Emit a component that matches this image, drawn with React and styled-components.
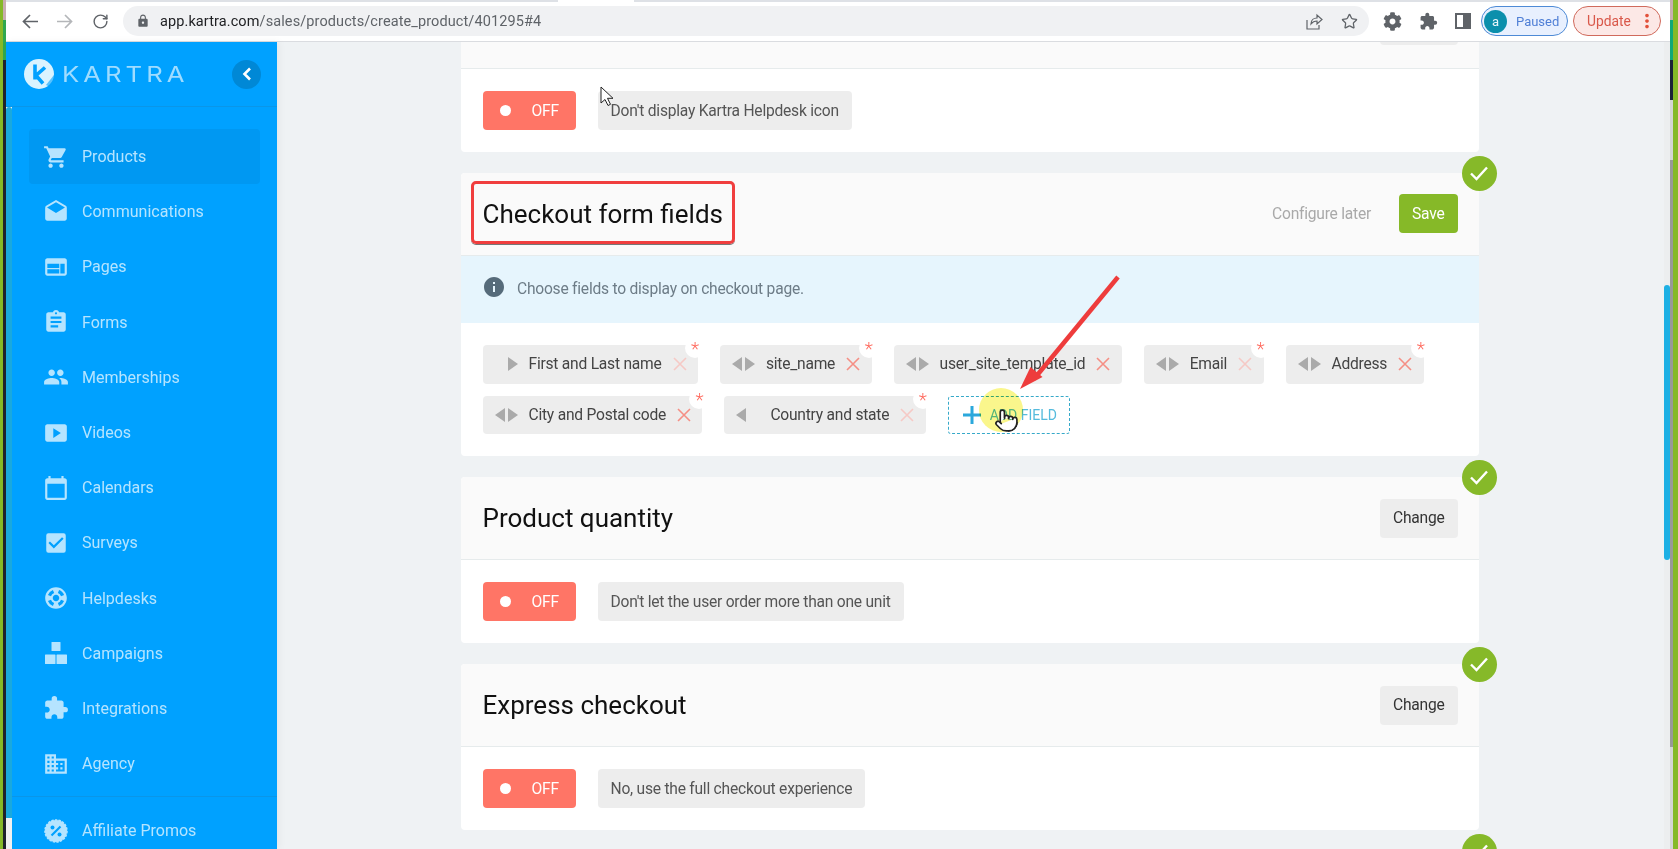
import styled, { createGlobalStyle, css } from "styled-components";
import { Pointer, RotateCw, Star } from "lucide-react";
import { FaCog } from "react-icons/fa";
import {
  MdCalendarToday,
  MdCheckBox,
  MdDomain,
  MdDrafts,
  MdExtension,
  MdGroup,
  MdInfo,
  MdLock,
  MdMoreVert,
  MdShoppingCart,
  MdSmartDisplay,
  MdSupport,
  MdAssignment,
  MdWeb,
} from "react-icons/md";

const GlobalStyle = createGlobalStyle`
  html, body { margin: 0; padding: 0; overflow: hidden; background: #eff2f4; }
  * { box-sizing: border-box; }
  body { font-family: Roboto, "Liberation Sans", sans-serif; }
`;

// the page text in the screenshot is a bit condensed
const bodyText = css`
  font-size: 15.6px;
  letter-spacing: -0.23px;
`;

const Frame = styled.div`
  display: flex;
  width: 1678px;
  height: 849px;
  overflow: hidden;
`;

const LeftEdge = styled.div`
  flex: 0 0 6px;
  background:
    linear-gradient(to bottom, #c9aeb0 0 20px, #2fa84f 20px 60px, #20242c 60px) 3px 0 / 3px 100% no-repeat,
    #86b928;
`;

const RightEdge = styled.div`
  flex: 0 0 8px;
  background:
    linear-gradient(
        to bottom,
        #c9aeb0 0 20px,
        #10a878 20px 60px,
        #1c2238 60px 100px,
        #d5d5d5 100px 160px,
        #999 160px 747px,
        #d5d5d5 747px
      )
      0 0 / 3px 100% no-repeat,
    #86b928;
`;

const Window = styled.div`
  flex: 1;
  display: flex;
  flex-direction: column;
  min-width: 0;
`;

const Toolbar = styled.header`
  flex: 0 0 42px;
  display: flex;
  align-items: center;
  padding: 2px 9px 1px 16px;
  background:
    linear-gradient(to right, #dee1e6 0 552px, #fff 552px 628px, #dee1e6 628px) 0 0 / 100% 2px no-repeat,
    #fff;
  border-bottom: 1px solid #dadce0;
`;

const NavIcon = styled.span`
  display: flex;
  width: 35px;
  color: ${(p) => (p.$off ? "#b4b6b9" : "#5f6368")};
`;

const UrlPill = styled.div`
  width: 1246px;
  height: 30px;
  margin-left: -4px;
  display: flex;
  align-items: center;
  padding: 0 11px 0 13px;
  border-radius: 15px;
  background: #f0f1f3;
  color: #5f6368;
  font-size: 14.5px;
  letter-spacing: 0.1px;
`;

const UrlText = styled.span`
  margin-left: 10px;
  margin-right: auto;
  white-space: nowrap;
  b {
    color: #202124;
    font-weight: 400;
  }
`;

const PillIcon = styled.span`
  display: flex;
  margin-left: 18px;
  color: #5f6368;
`;

const ExtIcons = styled.div`
  display: flex;
  align-items: center;
  gap: 17px;
  margin-left: 14px;
  margin-right: 10px;
  color: #5f6368;
  svg {
    display: block;
  }
`;

const ProfilePill = styled.div`
  width: 87px;
  height: 30px;
  display: flex;
  align-items: center;
  padding-left: 2px;
  border: 1.5px solid #4d8ad6;
  border-radius: 15px;
  background: #e8f0fe;
  color: #4f7fd6;
  font-size: 13px;
`;

const Avatar = styled.span`
  width: 23px;
  height: 23px;
  margin-right: 9px;
  display: flex;
  align-items: center;
  justify-content: center;
  border-radius: 50%;
  background: #0b8fac;
  color: #e8f6fa;
  font-size: 13px;
`;

const UpdatePill = styled.div`
  width: 88px;
  height: 30px;
  margin-left: 5px;
  display: flex;
  align-items: center;
  justify-content: space-between;
  padding: 0 2px 0 13px;
  border: 1.5px solid #d06a5c;
  border-radius: 15px;
  background: #fce8e6;
  color: #d9584a;
  font-size: 13.8px;
`;

const Workspace = styled.div`
  flex: 1;
  display: flex;
  min-height: 0;
`;

const Sidebar = styled.aside`
  position: relative;
  flex: 0 0 271px;
  display: flex;
  flex-direction: column;
  background: #00a1ff;
  color: #b5e4ff;
  box-shadow: 2px 0 8px rgba(0, 0, 0, 0.05);
  z-index: 2;
`;

const Brand = styled.div`
  flex: 0 0 65px;
  display: flex;
  align-items: center;
  padding: 0 16px 0 18px;
  border-bottom: 1px solid #0a96e8;
`;

const BrandName = styled.span`
  flex: 1;
  margin-left: 8px;
  color: #9fdcff;
  font-family: Inter, sans-serif;
  font-size: 22px;
  letter-spacing: 3.4px;
  transform: scaleX(1.17);
  transform-origin: left center;
`;

const Collapse = styled.span`
  width: 29px;
  height: 29px;
  display: flex;
  align-items: center;
  justify-content: center;
  border-radius: 50%;
  background: #0088d6;
`;

const SidebarTrack = styled.div`
  position: absolute;
  left: 0;
  top: 65px;
  bottom: 0;
  width: 6px;
  background: #f1f1f1;
`;

const SidebarThumb = styled.div`
  height: 711px;
  background: #1aa9dd;
  border-radius: 3px 3px 0 0;
`;

const Nav = styled.nav`
  display: flex;
  flex-direction: column;
  padding: 22px 17px 0 23px;
`;

const NavItem = styled.div`
  height: 55.2px;
  display: flex;
  align-items: center;
  gap: 13px;
  padding-left: 14px;
  border-radius: 4px;
  background: ${(p) => (p.$active ? "#0098f2" : "transparent")};
  font-size: 16.05px;
  svg {
    flex: none;
  }
`;

const NavFoot = styled(Nav)`
  margin-top: 5px;
  padding-top: 6px;
  border-top: 1px solid #0a96e8;
`;

const Main = styled.main`
  position: relative;
  flex: 1;
  overflow: hidden;
  background: #eff2f4;
`;

const PageTrack = styled.div`
  flex: 0 0 6px;
  padding-top: 243px;
  background: #eceeef;
`;

const PageThumb = styled.div`
  height: 275px;
  background: #1db0e4;
  border-radius: 3px;
`;

const Stack = styled.div`
  width: 1018px;
  margin: -56px 0 0 184px;
  display: flex;
  flex-direction: column;
  gap: 21px;
`;

const Card = styled.section`
  position: relative;
  background: #fff;
  border-radius: 4px;
`;

const CheckBadge = styled.span`
  position: absolute;
  right: -17.5px;
  top: -17.5px;
  width: 35px;
  height: 35px;
  display: flex;
  align-items: center;
  justify-content: center;
  border-radius: 50%;
  background: #86b929;
`;

const CardHead = styled.div`
  height: ${(p) => (p.$short ? "82.5px" : "83px")};
  display: flex;
  align-items: center;
  justify-content: space-between;
  padding: 0 21.5px;
  background: #fafafa;
  border-radius: 4px 4px 0 0;
  border-bottom: 1.5px solid #e6ebec;
`;

const Title = styled.h2`
  margin: 0;
  color: #111;
  font-size: 26px;
  font-weight: 400;
`;

const HeadActions = styled.div`
  display: flex;
  align-items: center;
  gap: 28px;
`;

const Later = styled.span`
  color: #a9a9a9;
  ${bodyText}
`;

const HeadButton = styled.span`
  height: 39px;
  display: flex;
  align-items: center;
  padding: 0 13px;
  margin-top: ${(p) => (p.$lift ? "-4px" : "0")};
  border-radius: 4px;
  background: ${(p) => (p.$save ? "#86b928" : "#ededed")};
  color: ${(p) => (p.$save ? "#fff" : "#333")};
  ${bodyText}
`;

const CardBody = styled.div`
  display: flex;
  gap: 21.5px;
  padding: 22px 21.5px;
`;

const OffSwitch = styled.span`
  width: 93.5px;
  height: 39px;
  display: flex;
  align-items: center;
  padding-left: 17px;
  border-radius: 4px;
  background: #ff7566;
  color: #fff;
  ${bodyText}
  i {
    width: 11px;
    height: 11px;
    margin-right: 21px;
    border-radius: 50%;
    background: #fff;
  }
`;

const OptionLabel = styled.span`
  height: 39px;
  display: flex;
  align-items: center;
  padding: 0 13px;
  border-radius: 4px;
  background: #ededed;
  color: #555;
  ${bodyText}
`;

const InfoBand = styled.div`
  height: 67.5px;
  display: flex;
  align-items: center;
  gap: 11px;
  padding: 0 21px;
  background: #e6f5fd;
  color: #6d7c87;
  ${bodyText}
  svg {
    color: #566b7a;
    margin-top: -4px;
  }
`;

const Tags = styled.div`
  display: flex;
  flex-wrap: wrap;
  gap: 12px 22px;
  padding: 22px 21.5px;
`;

const Tag = styled.div`
  position: relative;
  height: 38.5px;
  display: flex;
  align-items: center;
  padding: 0 11.4px 0 12px;
  border-radius: 4px;
  background: #ededed;
  color: #444;
  ${bodyText}
`;

const Triangle = styled.span`
  width: 0;
  height: 0;
  margin-right: ${(p) => (p.$right ? "10.5px" : "3.5px")};
  border-top: 7px solid transparent;
  border-bottom: 7px solid transparent;
  ${(p) => (p.$right ? "border-left" : "border-right")}: 10px solid #aaa;
  visibility: ${(p) => (p.$hide ? "hidden" : "visible")};
`;

const Remove = styled.svg`
  margin-left: 11px;
  width: 14px;
  height: 14px;
  stroke: ${(p) => (p.$faded ? "#f6c9c5" : "#f58f85")};
  stroke-width: 1.6;
`;

const Required = styled.span`
  position: absolute;
  right: -7px;
  top: -7px;
  width: 20px;
  height: 20px;
  display: flex;
  justify-content: center;
  border-radius: 50%;
  background: #fff;
  color: #ff6b5f;
  font-size: 19px;
  font-weight: 300;
  line-height: 22px;
`;

const AddField = styled.div`
  width: 122.5px;
  height: 38.5px;
  display: flex;
  align-items: center;
  gap: 9px;
  padding-left: 14px;
  border: 1px dashed #36a9c9;
  border-radius: 3px;
  color: #55bbdd;
  font-size: 14px;
  white-space: nowrap;
`;

const Highlight = styled.span`
  position: absolute;
  left: 702px;
  top: 346px;
  width: 44px;
  height: 44px;
  border-radius: 50%;
  background: #faf68c;
  mix-blend-mode: multiply;
`;

const HandCursor = styled(Pointer)`
  position: absolute;
  left: 717px;
  top: 366px;
`;

const ArrowCursor = styled.svg`
  position: absolute;
  left: 323px;
  top: 44px;
`;

const RedBox = styled.span`
  position: absolute;
  left: 194px;
  top: 139px;
  width: 264px;
  height: 63px;
  border: 3.5px solid #f03e3e;
  border-radius: 5px;
  box-shadow: 0 1px 0 #777;
`;

const RedArrow = styled.svg`
  position: absolute;
  left: 730px;
  top: 225px;
`;

const navItems = [
  ["Products", MdShoppingCart],
  ["Communications", MdDrafts],
  ["Pages", MdWeb],
  ["Forms", MdAssignment],
  ["Memberships", MdGroup],
  ["Videos", MdSmartDisplay],
  ["Calendars", MdCalendarToday],
  ["Surveys", MdCheckBox],
  ["Helpdesks", MdSupport],
  ["Campaigns", CampaignIcon],
  ["Integrations", MdExtension],
  ["Agency", MdDomain],
];

const fields = [
  { name: "First and Last name", noLeft: true, faded: true },
  { name: "site_name" },
  { name: "user_site_template_id", noStar: true },
  { name: "Email", faded: true },
  { name: "Address" },
  { name: "City and Postal code" },
  { name: "Country and state", noRight: true, faded: true },
];

function CampaignIcon({ size }) {
  return (
    <svg width={size} height={size} viewBox="0 0 26 26" fill="currentColor">
      <rect x="8.5" y="2" width="9" height="9" rx="0.6" />
      <rect x="2" y="14.5" width="10.5" height="9.5" rx="0.6" />
      <rect x="13.5" y="14.5" width="10.5" height="9.5" rx="0.6" />
    </svg>
  );
}

function PromoIcon({ size }) {
  return (
    <svg width={size} height={size} viewBox="0 0 26 26">
      <circle cx="13" cy="13" r="11" fill="currentColor" stroke="currentColor" strokeWidth="1.6" strokeDasharray="2.4 1.2" />
      <path d="M17.5 8.5l-9 9" stroke="#00a1ff" strokeWidth="2.2" />
      <circle cx="9.5" cy="9.5" r="2" fill="#00a1ff" />
      <circle cx="16.5" cy="16.5" r="2" fill="#00a1ff" />
    </svg>
  );
}

function KartraMark() {
  return (
    <svg width="30" height="30" viewBox="0 0 30 30">
      <circle cx="15" cy="15" r="15" fill="#d9f3ff" />
      <path d="M11 5.500v15M21 8.500l-9 8 7 8" fill="none" stroke="#00a1ff" strokeWidth="3.6" />
      <path d="M22 26l8-10v14z" fill="#00a1ff" opacity="0.6" />
    </svg>
  );
}

function Check() {
  return (
    <CheckBadge>
      <svg width="20" height="16" viewBox="0 0 20 16" fill="none" stroke="#fff" strokeWidth="2.4">
        <path d="M2 8.500l5.500 5.500L18 2.500" />
      </svg>
    </CheckBadge>
  );
}

function OptionCard({ title, label, lift }) {
  return (
    <Card>
      <Check />
      <CardHead>
        <Title>{title}</Title>
        <HeadButton $lift={lift}>Change</HeadButton>
      </CardHead>
      <CardBody>
        <OffSwitch>
          <i />
          OFF
        </OffSwitch>
        <OptionLabel>{label}</OptionLabel>
      </CardBody>
    </Card>
  );
}

function FieldTag({ field }) {
  return (
    <Tag>
      <Triangle $hide={field.noLeft} />
      <Triangle $right $hide={field.noRight} />
      {field.name}
      <Remove $faded={field.faded} viewBox="0 0 14 14">
        <path d="M1 1l12 12M13 1L1 13" />
      </Remove>
      {!field.noStar && <Required>*</Required>}
    </Tag>
  );
}

export default function App() {
  return (
    <Frame>
      <GlobalStyle />
      <LeftEdge />
      <Window>
        <Toolbar>
          <NavIcon>
            <svg width="16" height="15" viewBox="0 0 16 15" fill="none" stroke="currentColor" strokeWidth="1.7">
              <path d="M16 7.500H1.500M8 1L1.500 7.500 8 14" />
            </svg>
          </NavIcon>
          <NavIcon $off>
            <svg width="16" height="15" viewBox="0 0 16 15" fill="none" stroke="currentColor" strokeWidth="1.7">
              <path d="M0 7.500h14.500M8 1l6.500 6.500L8 14" />
            </svg>
          </NavIcon>
          <NavIcon>
            <RotateCw size={17} strokeWidth={2} />
          </NavIcon>
          <UrlPill>
            <MdLock size={14} />
            <UrlText>
              <b>app.kartra.com</b>/sales/products/create_product/401295#4
            </UrlText>
            <PillIcon>
              <svg width="17" height="17" viewBox="0 0 17 17" fill="none" stroke="currentColor" strokeWidth="1.2">
                <path d="M1 7v9h12v-4M5 11c0-4 3-6 6-6V2l5 4.500L11 11V8c-2.500 0-4.500 1-6 3z" />
              </svg>
            </PillIcon>
            <PillIcon>
              <Star size={17} strokeWidth={1.8} />
            </PillIcon>
          </UrlPill>
          <ExtIcons>
            <FaCog size={19} />
            <MdExtension size={19} />
            <svg width="16" height="16" viewBox="0 0 16 16">
              <path d="M0 0h16v16H0zM2 2v12h6V2z" fill="currentColor" fillRule="evenodd" />
            </svg>
          </ExtIcons>
          <ProfilePill>
            <Avatar>a</Avatar>
            Paused
          </ProfilePill>
          <UpdatePill>
            Update
            <MdMoreVert size={22} color="#e2503a" />
          </UpdatePill>
        </Toolbar>
        <Workspace>
          <Sidebar>
            <Brand>
              <KartraMark />
              <BrandName>KARTRA</BrandName>
              <Collapse>
                <svg width="10" height="14" viewBox="0 0 10 14" fill="none" stroke="#fff" strokeWidth="2.6">
                  <path d="M8 1.500L2.500 7 8 12.500" />
                </svg>
              </Collapse>
            </Brand>
            <Nav>
              {navItems.map(([label, Icon], i) => (
                <NavItem key={label} $active={i === 0}>
                  <Icon size={26} />
                  {label}
                </NavItem>
              ))}
            </Nav>
            <NavFoot>
              <NavItem>
                <PromoIcon size={26} />
                Affiliate Promos
              </NavItem>
            </NavFoot>
            <SidebarTrack>
              <SidebarThumb />
            </SidebarTrack>
          </Sidebar>
          <Main>
            <Stack>
              <OptionCard title="" lift label="Don't display Kartra Helpdesk icon" />
              <Card>
                <Check />
                <CardHead $short>
                  <Title>Checkout form fields</Title>
                  <HeadActions>
                    <Later>Configure later</Later>
                    <HeadButton $save>Save</HeadButton>
                  </HeadActions>
                </CardHead>
                <InfoBand>
                  <MdInfo size={24} />
                  Choose fields to display on checkout page.
                </InfoBand>
                <Tags>
                  {fields.map((field) => (
                    <FieldTag key={field.name} field={field} />
                  ))}
                  <AddField>
                    <svg width="18" height="18" viewBox="0 0 18 18" stroke="#2ba8dc" strokeWidth="3">
                      <path d="M9 0v18M0 9h18" />
                    </svg>
                    ADD FIELD
                  </AddField>
                </Tags>
              </Card>
              <OptionCard title="Product quantity" label="Don't let the user order more than one unit" />
              <OptionCard title="Express checkout" label="No, use the full checkout experience" />
              <Card>
                <Check />
              </Card>
            </Stack>
            <ArrowCursor width="14" height="21" viewBox="0 0 14 21">
              <path d="M1 1v16l4-3.500 3 6 2.500-1.200-3-6H13z" fill="#fff" stroke="#222" strokeWidth="1" />
            </ArrowCursor>
            <RedBox />
            <RedArrow width="120" height="130" viewBox="0 0 120 130">
              <path d="M111 10L27 112" stroke="#ee3c3c" strokeWidth="4.5" />
              <path d="M13 122l10.500-22 12 10z" fill="#ee3c3c" />
            </RedArrow>
            <Highlight />
            <HandCursor size={25} fill="#fff" color="#222" strokeWidth={1.6} />
          </Main>
          <PageTrack>
            <PageThumb />
          </PageTrack>
        </Workspace>
      </Window>
      <RightEdge />
    </Frame>
  );
}
